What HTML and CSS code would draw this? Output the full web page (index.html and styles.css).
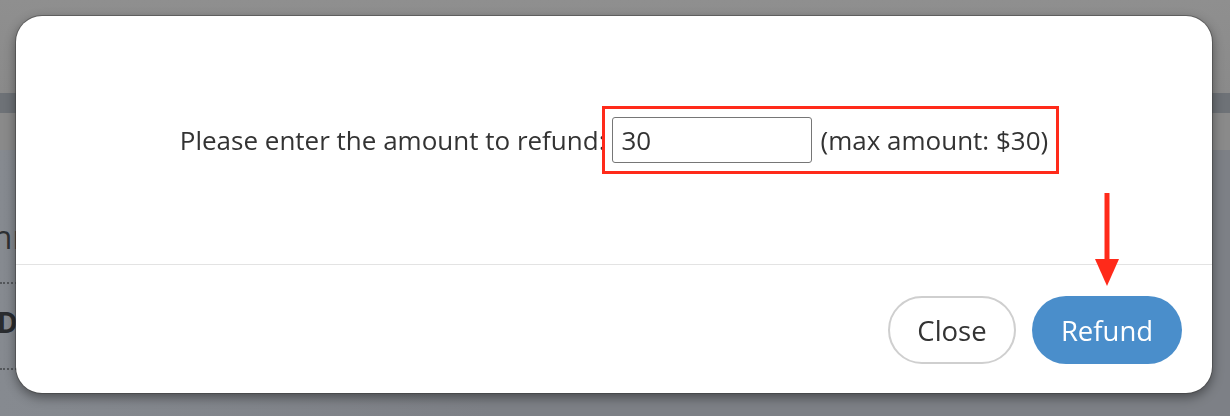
FILE: index.html
```html
<!DOCTYPE html>
<html lang="en">

<head>
    <meta charset="UTF-8">
    <meta name="viewport" content="width=device-width, initial-scale=1.0">
    <title>Refund</title>
    <link rel="stylesheet" href="styles.css">
</head>

<body>
    <!-- Page behind the dialog (dimmed) -->
    <div class="page">
        <div class="page-top"></div>
        <div class="page-band"></div>
        <div class="page-sub"></div>
        <div class="page-content">
            <div class="page-title">Enrollment</div>
            <div class="page-row"></div>
            <div class="page-label">Details</div>
            <div class="page-row"></div>
        </div>
    </div>

    <!-- Refund dialog -->
    <div class="modal">
        <div class="modal-body">
            <label class="refund-label">Please enter the amount to refund:</label>
            <span class="highlight">
                <input type="text" class="refund-input" value="30">
                <span class="max-amount">(max amount: $30)</span>
            </span>
        </div>
        <div class="modal-footer">
            <button class="btn btn-close">Close</button>
            <button class="btn btn-refund">Refund</button>
        </div>

        <svg class="arrow" width="26" height="95" viewBox="0 0 26 95">
            <line x1="13" y1="0" x2="13" y2="70" stroke="#ff2a1a" stroke-width="5" />
            <polygon points="1,66 25,66 13,93" fill="#ff2a1a" />
        </svg>
    </div>
</body>

</html>
```

FILE: styles.css
```css
html,
body {
    margin: 0;
    height: 416px;
    overflow: hidden;
}

body {
    font-family: "Open Sans", "Noto Sans", sans-serif;
    background-color: #7d8086;
}

/* Dimmed page behind the dialog */
.page {
    height: 416px;
    overflow: hidden;
}

.page-top {
    height: 93px;
    background: linear-gradient(#8f8f8f, #8a8a8a);
}

.page-band {
    height: 20px;
    background-color: #6e7277;
}

.page-sub {
    height: 37px;
    background-color: #8a8a8a;
}

.page-content {
    box-sizing: border-box;
    height: 266px;
    padding-top: 67px;
    background: linear-gradient(90deg, #868a90, #7d8086 40%);
}

.page-title {
    font-size: 32px;
    line-height: 40px;
    color: #2e3033;
    margin-left: -25px;
    white-space: nowrap;
}

.page-row {
    border-bottom: 2px dotted #54575b;
    margin-top: 25px;
    width: 140px;
}

.page-label {
    font-size: 28px;
    line-height: 36px;
    font-weight: bold;
    color: #2a2c2f;
    margin: 20px 0 28px -3px;
}

/* Dialog */
.modal {
    position: fixed;
    left: 16px;
    top: 16px;
    width: 1196px;
    height: 377px;
    background-color: #fff;
    border-radius: 26px;
    box-shadow: 0 0 0 1px rgba(60, 60, 60, 0.5), 0 4px 12px rgba(0, 0, 0, 0.45);
    display: flex;
    flex-direction: column;
}

.modal-body {
    height: 248px;
    display: flex;
    align-items: center;
    justify-content: center;
    font-size: 26px;
    color: #333;
}

.refund-label {
    margin-right: 7px;
}

.highlight {
    position: relative;
    display: flex;
    align-items: center;
    gap: 8px;
}

.highlight::after {
    content: "";
    position: absolute;
    top: -11px;
    bottom: -11px;
    left: -10px;
    right: -11px;
    border: 3px solid #ff2a1a;
    pointer-events: none;
}

.refund-input {
    width: 200px;
    height: 46px;
    box-sizing: border-box;
    border: 1px solid #767676;
    border-radius: 3px;
    padding: 0 8px;
    font-family: inherit;
    font-size: 26px;
    color: #333;
}

.modal-footer {
    border-top: 1px solid #e3e3e3;
    flex: 1;
    display: flex;
    justify-content: flex-end;
    align-items: flex-start;
    gap: 16px;
    padding: 31px 30px 0 0;
}

.btn {
    height: 68px;
    border-radius: 34px;
    font-family: inherit;
    font-size: 27.5px;
    padding: 0;
    cursor: pointer;
}

.btn-close {
    width: 128px;
    background-color: #fff;
    border: 2px solid #cfcfcf;
    color: #333;
}

.btn-refund {
    width: 150px;
    background-color: #4a8ecb;
    border: none;
    color: #fff;
}

.arrow {
    position: absolute;
    left: 1078px;
    top: 177px;
}
```
